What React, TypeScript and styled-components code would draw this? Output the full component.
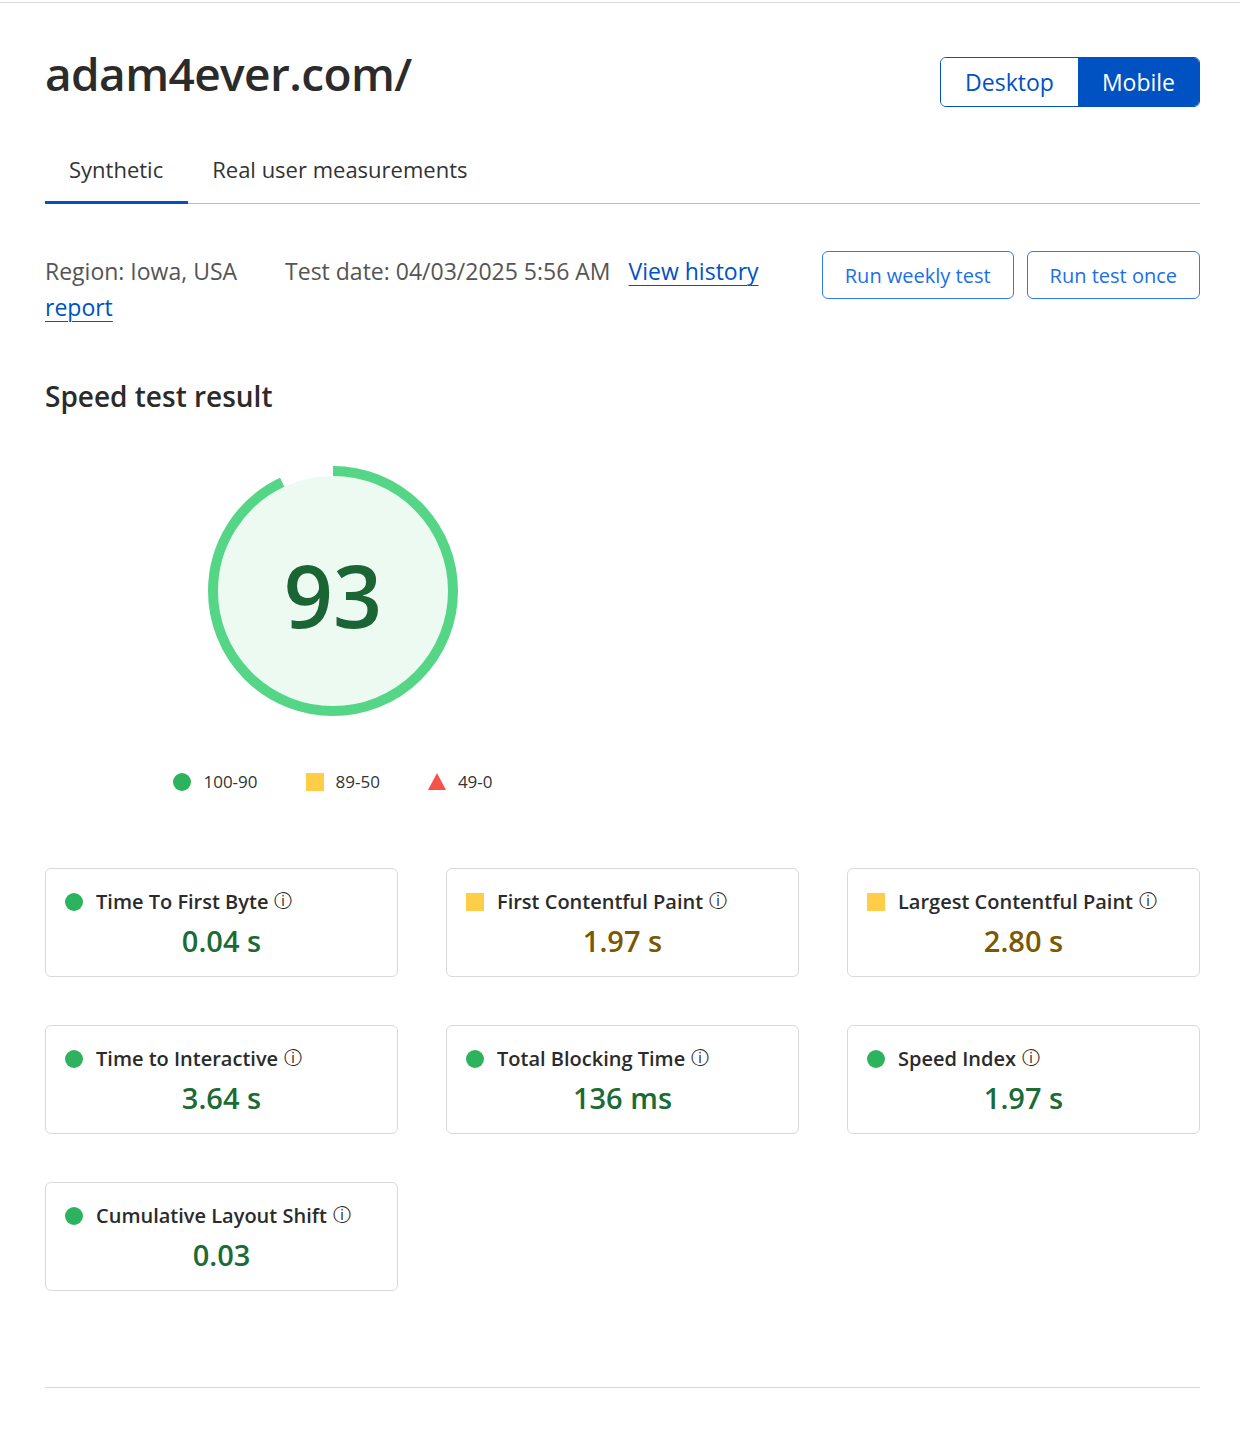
import React from "react";
import styled, { createGlobalStyle } from "styled-components";

const Global = createGlobalStyle`
  html, body { margin: 0; padding: 0; background: #fff; }
  body { font-family: "Open Sans", "Noto Sans", Arial, sans-serif; color: #333; }
  * { box-sizing: border-box; }
`;

const Page = styled.div`
  margin-top: 2px;
  border-top: 1px solid #dedede;
  padding: 0 40px 0 45px;
`;

const Header = styled.div`
  display: flex;
  justify-content: space-between;
  align-items: flex-start;
  padding-top: 40px;
`;

const Title = styled.h1`
  margin: 0;
  font-size: 46px;
  font-weight: 600;
  line-height: 60px;
  color: #2b2b2b;
  letter-spacing: -0.6px;
`;

const Toggle = styled.div`
  display: flex;
  margin-top: 14px;
  border: 1px solid #0052c2;
  border-radius: 6px;
  overflow: hidden;
`;

const ToggleBtn = styled.button<{ $active?: boolean }>`
  font-family: inherit;
  font-size: 23px;
  height: 48px;
  padding: 0 24px;
  border: none;
  background: ${(p) => (p.$active ? "#0052c2" : "#fff")};
  color: ${(p) => (p.$active ? "#fff" : "#0052c2")};
  cursor: pointer;
`;

const Tabs = styled.div`
  display: flex;
  margin-top: 47px;
  border-bottom: 1px solid #bdbdbd;
`;

const Tab = styled.div<{ $active?: boolean }>`
  font-size: 22px;
  height: 50px;
  line-height: 30px;
  padding: 0 25px 0 24px;
  color: #333;
  border-bottom: 3px solid ${(p) => (p.$active ? "#0052c2" : "transparent")};
  margin-bottom: -1px;
`;

const InfoRow = styled.div`
  display: flex;
  justify-content: space-between;
  align-items: flex-start;
  margin-top: 49px;
`;

const InfoText = styled.div`
  flex: 1;
  max-width: 760px;
  font-size: 23px;
  line-height: 36px;
  color: #555;
`;

const InfoItem = styled.span<{ $gap: number }>`
  margin-right: ${(p) => p.$gap}px;
`;

const Link = styled.a`
  color: #0052c2;
  text-decoration: underline;
  text-underline-offset: 5px;
  text-decoration-thickness: 1px;
`;

const Actions = styled.div`
  display: flex;
  gap: 13px;
  margin-top: -2px;
`;

const ActionBtn = styled.button`
  font-family: inherit;
  font-size: 20px;
  height: 48px;
  padding: 0 22px;
  background: #fff;
  color: #1a6fe8;
  border: 1.5px solid #2a7cf0;
  border-radius: 6px;
  cursor: pointer;
`;

const SectionTitle = styled.h2`
  margin: 51px 0 0;
  font-size: 28px;
  font-weight: 600;
  line-height: 40px;
  color: #2b2b2b;
`;

const GaugeBlock = styled.div`
  width: 576px;
  display: flex;
  flex-direction: column;
  align-items: center;
  margin-top: 50px;
`;

const GaugeWrap = styled.div`
  position: relative;
  width: 250px;
  height: 250px;
`;

const GaugeScore = styled.div`
  position: absolute;
  inset: 0;
  display: flex;
  align-items: center;
  justify-content: center;
  font-size: 86px;
  font-weight: 600;
  color: #1b6535;
  padding-top: 6px;
`;

const Legend = styled.div`
  display: flex;
  gap: 48px;
  margin-top: 54px;
  font-size: 17px;
  color: #333;
`;

const LegendItem = styled.div`
  display: flex;
  align-items: center;
  gap: 12px;
`;

const Dot = styled.span`
  display: inline-block;
  width: 18px;
  height: 18px;
  border-radius: 50%;
  background: #2db35d;
  flex: none;
`;

const Square = styled.span`
  display: inline-block;
  width: 18px;
  height: 18px;
  background: #ffcd48;
  flex: none;
`;

const Triangle = styled.span`
  display: inline-block;
  width: 0;
  height: 0;
  border-left: 9px solid transparent;
  border-right: 9px solid transparent;
  border-bottom: 17px solid #f5534a;
  flex: none;
`;

const Cards = styled.div`
  display: grid;
  grid-template-columns: repeat(3, 1fr);
  gap: 48px;
  margin-top: 75px;
`;

const Card = styled.div`
  border: 1px solid #d9d9d9;
  border-radius: 6px;
  height: 109px;
  padding: 20px 19px 0;
`;

const CardHead = styled.div`
  display: flex;
  align-items: center;
  gap: 13px;
  font-size: 20px;
  font-weight: 600;
  color: #2b2b2b;
  line-height: 26px;
`;

const Info = styled.span`
  font-size: 18px;
  font-weight: 400;
  color: #222;
  margin-left: -7px;
  position: relative;
  top: -2px;
`;

const CardValue = styled.div<{ $tone: "good" | "mid" }>`
  text-align: center;
  font-size: 29px;
  font-weight: 600;
  line-height: 36px;
  margin-top: 8px;
  color: ${(p) => (p.$tone === "good" ? "#1b6b35" : "#7a5800")};
`;

const Footer = styled.div`
  margin-top: 96px;
  border-top: 1px solid #d6d6d6;
  height: 57px;
`;

type Metric = { name: string; value: string; tone: "good" | "mid" };

const metrics: Metric[] = [
  { name: "Time To First Byte", value: "0.04 s", tone: "good" },
  { name: "First Contentful Paint", value: "1.97 s", tone: "mid" },
  { name: "Largest Contentful Paint", value: "2.80 s", tone: "mid" },
  { name: "Time to Interactive", value: "3.64 s", tone: "good" },
  { name: "Total Blocking Time", value: "136 ms", tone: "good" },
  { name: "Speed Index", value: "1.97 s", tone: "good" },
  { name: "Cumulative Layout Shift", value: "0.03", tone: "good" },
];

function Gauge({ score }: { score: number }) {
  const r = 120;
  const c = 2 * Math.PI * r;
  const len = (score / 100) * c;
  return (
    <GaugeWrap>
      <svg width="250" height="250" viewBox="0 0 250 250">
        <circle cx="125" cy="125" r="115" fill="#edfaf1" />
        <circle
          cx="125"
          cy="125"
          r={r}
          fill="none"
          stroke="#55d687"
          strokeWidth="10"
          strokeDasharray={`${len} ${c}`}
          transform="rotate(-90 125 125)"
        />
      </svg>
      <GaugeScore>{score}</GaugeScore>
    </GaugeWrap>
  );
}

export default function App() {
  return (
    <>
      <Global />
      <Page>
        <Header>
          <Title>adam4ever.com/</Title>
          <Toggle>
            <ToggleBtn>Desktop</ToggleBtn>
            <ToggleBtn $active>Mobile</ToggleBtn>
          </Toggle>
        </Header>
        <Tabs>
          <Tab $active>Synthetic</Tab>
          <Tab>Real user measurements</Tab>
        </Tabs>
        <InfoRow>
          <InfoText>
            <InfoItem $gap={48}>Region: Iowa, USA</InfoItem>
            <InfoItem $gap={18}>Test date: 04/03/2025 5:56 AM</InfoItem>
            <Link href="#">View history report</Link>
          </InfoText>
          <Actions>
            <ActionBtn>Run weekly test</ActionBtn>
            <ActionBtn>Run test once</ActionBtn>
          </Actions>
        </InfoRow>
        <SectionTitle>Speed test result</SectionTitle>
        <GaugeBlock>
          <Gauge score={93} />
          <Legend>
            <LegendItem>
              <Dot />
              100-90
            </LegendItem>
            <LegendItem>
              <Square />
              89-50
            </LegendItem>
            <LegendItem>
              <Triangle />
              49-0
            </LegendItem>
          </Legend>
        </GaugeBlock>
        <Cards>
          {metrics.map((m) => (
            <Card key={m.name}>
              <CardHead>
                {m.tone === "good" ? <Dot /> : <Square />}
                <span>{m.name}</span>
                <Info>ⓘ</Info>
              </CardHead>
              <CardValue $tone={m.tone}>{m.value}</CardValue>
            </Card>
          ))}
        </Cards>
        <Footer />
      </Page>
    </>
  );
}
